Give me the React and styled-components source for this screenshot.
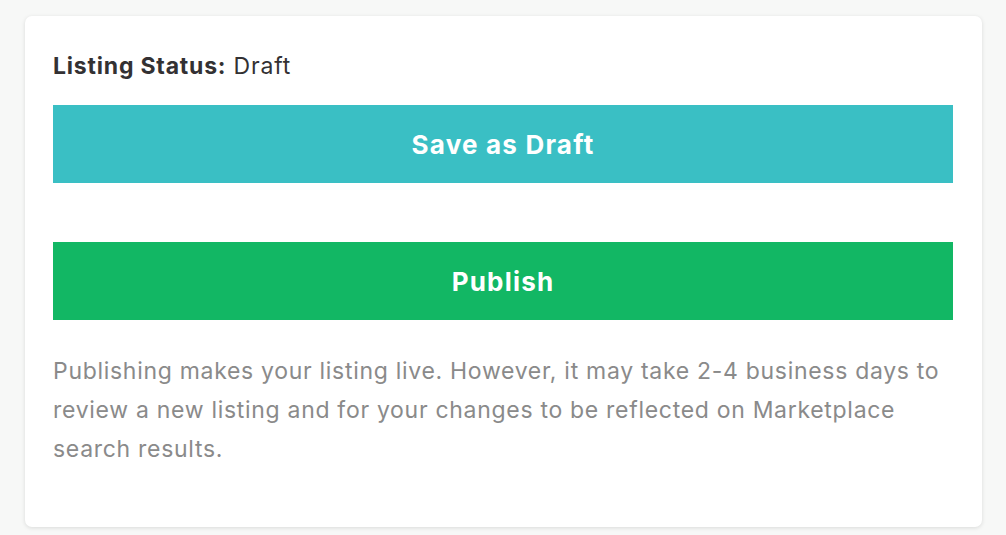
import styled, { createGlobalStyle } from "styled-components";

const GlobalStyle = createGlobalStyle`
  body {
    margin: 0;
    background-color: #f7f8f7;
    font-family: Inter, "Open Sans", sans-serif;
  }
`;

const Page = styled.div`
  padding: 16px 24px 8px 25px;
`;

const StatusCard = styled.div`
  display: flex;
  flex-direction: column;
  background-color: #ffffff;
  border-radius: 7px;
  box-shadow: 0 1px 4px rgba(0, 0, 0, 0.12);
  padding: 35px 29px 58px 28px;
`;

const StatusLine = styled.p`
  margin: 0 0 24px;
  font-size: 23px;
  line-height: 30px;
  letter-spacing: 0.8px;
  color: #333133;
`;

const Bold = styled.span`
  font-weight: 700;
`;

const ActionButton = styled.button`
  display: flex;
  align-items: center;
  justify-content: center;
  width: 100%;
  height: 78px;
  border: none;
  border-radius: 0;
  background-color: ${({ $color }) => $color};
  color: #ffffff;
  font-family: inherit;
  font-size: 26px;
  font-weight: 700;
  letter-spacing: 1.2px;
  cursor: pointer;
  margin-bottom: ${({ $spacing }) => $spacing || "0"};
`;

const Note = styled.p`
  margin: 32px 0 0;
  font-size: 23px;
  line-height: 39px;
  letter-spacing: 0.7px;
  color: #8a8a8a;
`;

function App() {
  return (
    <Page>
      <GlobalStyle />
      <StatusCard>
        <StatusLine>
          <Bold>Listing Status:</Bold> Draft
        </StatusLine>
        <ActionButton $color="#3abfc4" $spacing="59px">
          Save as Draft
        </ActionButton>
        <ActionButton $color="#12b764">Publish</ActionButton>
        <Note>
          Publishing makes your listing live. However, it may take 2-4 business
          days to review a new listing and for your changes to be reflected on
          Marketplace search results.
        </Note>
      </StatusCard>
    </Page>
  );
}

export default App;
